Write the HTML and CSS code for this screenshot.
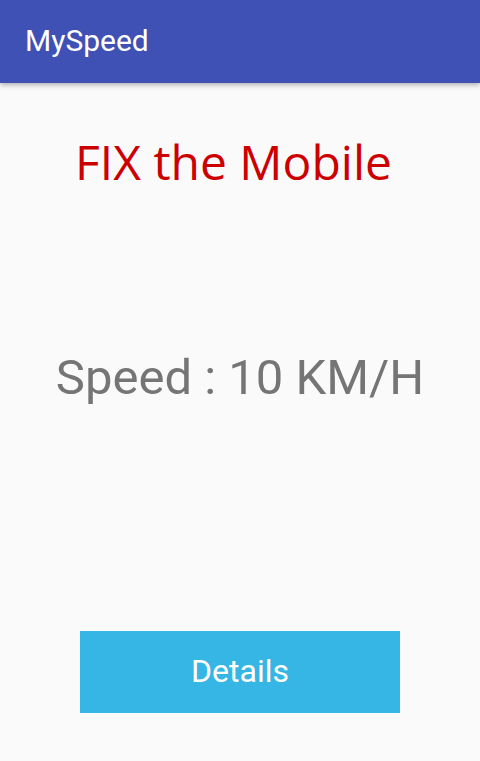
FILE: index.html
```html
<!DOCTYPE html>
<html>
<head>
<meta charset="utf-8">
<link rel="stylesheet" href="styles.css">
</head>
<body>
<header class="appbar"><span class="title">MySpeed</span></header>
<main class="content">
  <div class="headline">FIX the Mobile</div>
  <div class="speed">Speed : 10 KM/H</div>
  <button class="details">Details</button>
</main>
</body>
</html>
```
FILE: styles.css
```css
html, body {
  margin: 0;
  padding: 0;
  height: 100%;
}
body {
  background: #fafafa;
  font-family: Roboto, "Noto Sans", sans-serif;
  display: flex;
  flex-direction: column;
  overflow: hidden;
}
.appbar {
  height: 83px;
  background: #3f51b5;
  display: flex;
  align-items: center;
  padding-left: 25px;
  box-shadow: 0 2px 5px rgba(0,0,0,0.3);
  position: relative;
  z-index: 1;
  flex-shrink: 0;
}
.title {
  color: #fff;
  font-size: 30px;
  line-height: 1;
  margin-top: -2px;
}
.content {
  display: flex;
  flex-direction: column;
  align-items: center;
  flex: 1;
}
.headline {
  font-family: "Open Sans", sans-serif;
  color: #cc0000;
  font-size: 48px;
  line-height: 64px;
  margin-top: 47px;
  margin-right: 13px;
}
.speed {
  color: #757575;
  font-size: 49px;
  line-height: 60px;
  margin-top: 154px;
}
.details {
  margin-top: 223px;
  width: 320px;
  height: 82px;
  border: none;
  background: #35b6e5;
  color: #fff;
  font-family: Roboto, sans-serif;
  font-size: 32px;
  padding: 0 0 2px 0;
}
```
